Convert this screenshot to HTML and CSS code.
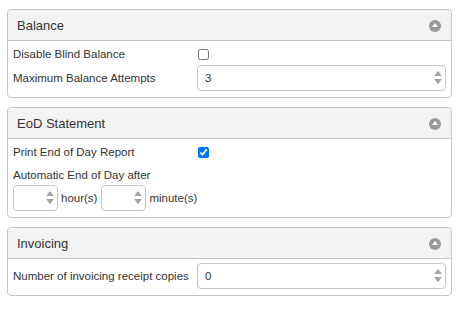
FILE: index.html
```html
<!DOCTYPE html>
<html>
<head>
    <title>Settings</title>
    <link rel="stylesheet" href="styles.css">
</head>
<body>
    <div class="panel">
        <div class="panel-header">
            <span class="panel-title">Balance</span>
            <span class="toggle-icon"></span>
        </div>
        <div class="panel-body">
            <div class="form-row">
                <label class="form-label" for="blindBalance">Disable Blind Balance</label>
                <input type="checkbox" id="blindBalance">
            </div>
            <div class="form-row">
                <label class="form-label" for="balanceAttempts">Maximum Balance Attempts</label>
                <span class="number-wrap">
                    <input type="number" class="number-input" id="balanceAttempts" value="3">
                    <span class="spinner"><span class="up"></span><span class="down"></span></span>
                </span>
            </div>
        </div>
    </div>

    <div class="panel">
        <div class="panel-header">
            <span class="panel-title">EoD Statement</span>
            <span class="toggle-icon"></span>
        </div>
        <div class="panel-body">
            <div class="form-row">
                <label class="form-label" for="printEod">Print End of Day Report</label>
                <input type="checkbox" id="printEod" checked>
            </div>
            <div class="form-label single">Automatic End of Day after</div>
            <div class="time-row">
                <span class="number-wrap small">
                    <input type="number" class="number-input" id="eodHours">
                    <span class="spinner"><span class="up"></span><span class="down"></span></span>
                </span>
                <span class="unit">hour(s)</span>
                <span class="number-wrap small">
                    <input type="number" class="number-input" id="eodMinutes">
                    <span class="spinner"><span class="up"></span><span class="down"></span></span>
                </span>
                <span class="unit">minute(s)</span>
            </div>
        </div>
    </div>

    <div class="panel">
        <div class="panel-header">
            <span class="panel-title">Invoicing</span>
            <span class="toggle-icon"></span>
        </div>
        <div class="panel-body">
            <div class="form-row">
                <label class="form-label" for="receiptCopies">Number of invoicing receipt copies</label>
                <span class="number-wrap">
                    <input type="number" class="number-input" id="receiptCopies" value="0">
                    <span class="spinner"><span class="up"></span><span class="down"></span></span>
                </span>
            </div>
        </div>
    </div>
</body>
</html>
```

FILE: styles.css
```css
body {
    font-family: "Liberation Sans", Arial, sans-serif;
    color: #333;
    background-color: #fff;
    margin: 9px 8px 0 7px;
    padding: 0;
}

.panel {
    border: 1px solid #c5c5c5;
    border-radius: 4px;
    margin-bottom: 9px;
}

.panel-header {
    display: flex;
    align-items: center;
    justify-content: space-between;
    height: 30px;
    padding: 0 10px 0 9px;
    background-color: #f3f3f3;
    border-bottom: 1px solid #c5c5c5;
    border-radius: 4px 4px 0 0;
}

.panel-title {
    font-size: 13px;
    padding-top: 1px;
}

.toggle-icon {
    position: relative;
    width: 12px;
    height: 12px;
    margin-top: 2px;
    border-radius: 50%;
    background-color: #999;
}

.toggle-icon::after {
    content: "";
    position: absolute;
    left: 3px;
    top: 3px;
    border-left: 3px solid transparent;
    border-right: 3px solid transparent;
    border-bottom: 4px solid #fff;
}

.panel-body {
    padding: 4px 5px 6px 5px;
}

.form-row {
    display: flex;
    align-items: center;
    min-height: 18px;
    margin-bottom: 2px;
}

.form-row:last-child {
    margin-bottom: 0;
}

.form-label {
    width: 184px;
    flex-shrink: 0;
    font-size: 11.5px;
    white-space: nowrap;
}

.form-label.single {
    width: auto;
    height: 18px;
    line-height: 18px;
    margin-top: 5px;
    margin-bottom: 1px;
}

input[type="checkbox"] {
    width: 11px;
    height: 11px;
    margin: 0 0 0 1px;
}

.number-wrap {
    position: relative;
    display: flex;
    flex: 1;
}

.number-input {
    flex: 1;
    width: 100%;
    box-sizing: border-box;
    height: 26px;
    padding: 0 14px 0 7px;
    border: 1px solid #c5c5c5;
    border-radius: 4px;
    font-family: "Liberation Sans", Arial, sans-serif;
    font-size: 11.5px;
    color: #333;
    -moz-appearance: textfield;
    appearance: textfield;
}

.number-input::-webkit-inner-spin-button,
.number-input::-webkit-outer-spin-button {
    -webkit-appearance: none;
    margin: 0;
}

.spinner {
    position: absolute;
    right: 4px;
    top: 6px;
    display: flex;
    flex-direction: column;
    align-items: center;
    gap: 3px;
    width: 9px;
}

.spinner .up {
    border-left: 4px solid transparent;
    border-right: 4px solid transparent;
    border-bottom: 5px solid #a3a3a3;
}

.spinner .down {
    border-left: 4px solid transparent;
    border-right: 4px solid transparent;
    border-top: 5px solid #a3a3a3;
}

.time-row {
    display: flex;
    align-items: center;
    gap: 3px;
}

.number-wrap.small {
    flex: none;
    width: 45px;
}

.unit {
    font-size: 11.5px;
    margin-right: 1px;
}
```
